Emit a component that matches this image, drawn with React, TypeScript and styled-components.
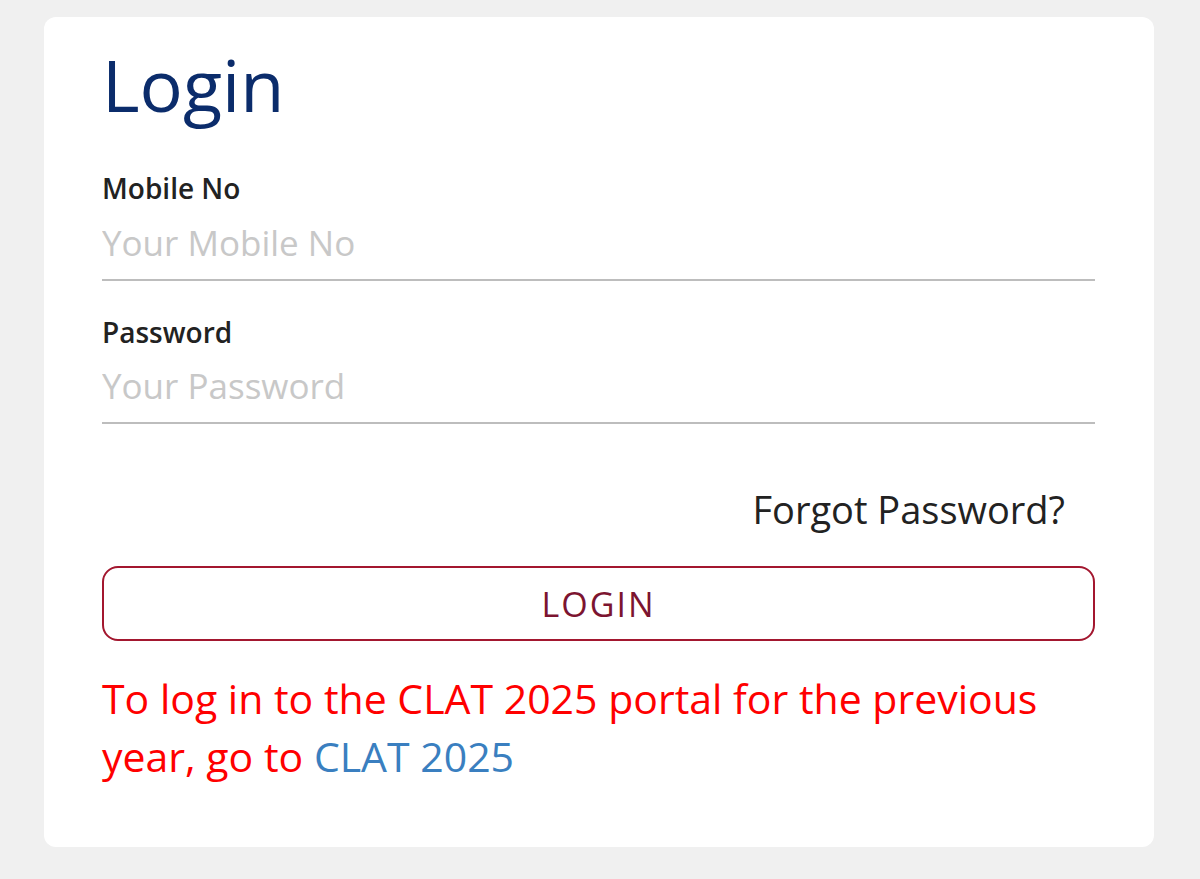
import React from 'react';
import styled, { createGlobalStyle } from 'styled-components';

const GlobalStyle = createGlobalStyle`
  html, body {
    margin: 0;
    padding: 0;
    background: #f0f0f0;
    font-family: "Open Sans", "Noto Sans", sans-serif;
  }
`;

const Page = styled.div`
  padding: 17px 46px 32px 44px;
`;

const Card = styled.div`
  background: #ffffff;
  border-radius: 12px;
  min-height: 830px;
  box-sizing: border-box;
  padding: 24px 59px 40px 58px;
  display: flex;
  flex-direction: column;
`;

const Title = styled.h1`
  margin: 0 0 43px;
  font-size: 72px;
  font-weight: 400;
  line-height: 1.2;
  color: #0b2c6b;
`;

const Field = styled.div`
  display: flex;
  flex-direction: column;
  margin-bottom: 33px;
`;

const Label = styled.label`
  font-size: 28px;
  font-weight: 600;
  color: #222222;
  line-height: 1.3;
`;

const Input = styled.input`
  border: none;
  border-bottom: 2px solid #bdbdbd;
  outline: none;
  padding: 12px 0 13px;
  font-family: inherit;
  font-size: 35px;
  color: #333;
  background: transparent;

  &::placeholder {
    color: #c8c8c8;
  }
`;

const ForgotRow = styled.div`
  display: flex;
  justify-content: flex-end;
  padding-right: 30px;
  margin-top: 26px;
  margin-bottom: 31px;
`;

const ForgotLink = styled.a`
  font-size: 38px;
  color: #222222;
  text-decoration: none;
`;

const LoginButton = styled.button`
  height: 75px;
  border: 2px solid #a3172f;
  border-radius: 16px;
  background: #ffffff;
  color: #7c1430;
  font-family: inherit;
  font-size: 34px;
  letter-spacing: 2px;
  cursor: pointer;
`;

const Notice = styled.p`
  margin: 28px 0 0;
  font-size: 41px;
  line-height: 58px;
  color: #ff0000;
`;

const NoticeLink = styled.a`
  color: #3a7fc0;
  text-decoration: none;
`;

export default function App() {
  return (
    <>
      <GlobalStyle />
      <Page>
        <Card>
          <Title>Login</Title>
          <Field>
            <Label>Mobile No</Label>
            <Input type="text" placeholder="Your Mobile No" />
          </Field>
          <Field>
            <Label>Password</Label>
            <Input type="password" placeholder="Your Password" />
          </Field>
          <ForgotRow>
            <ForgotLink href="#">Forgot Password?</ForgotLink>
          </ForgotRow>
          <LoginButton>LOGIN</LoginButton>
          <Notice>
            To log in to the CLAT 2025 portal for the previous year, go to{' '}
            <NoticeLink href="#">CLAT 2025</NoticeLink>
          </Notice>
        </Card>
      </Page>
    </>
  );
}
